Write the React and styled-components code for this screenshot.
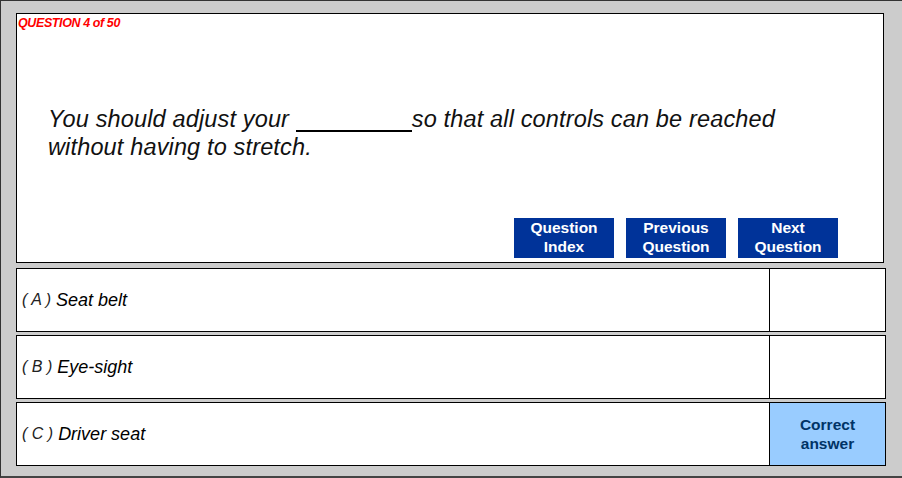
import styled, { createGlobalStyle } from 'styled-components';

const GlobalStyle = createGlobalStyle`
  html, body {
    margin: 0;
    padding: 0;
    background: #cccccc;
  }
`;

const answers = [
  { letter: 'A', text: 'Seat belt', correct: false },
  { letter: 'B', text: 'Eye-sight', correct: false },
  { letter: 'C', text: 'Driver seat', correct: true },
];

const App = () => {
  return (
    <>
      <GlobalStyle />
      <Frame>
        <QuestionPanel>
          <Counter>QUESTION 4 of 50</Counter>
          <QuestionText>
            You should adjust your <Blank />so that all controls can be reached
            without having to stretch.
          </QuestionText>
          <NavBar>
            <NavButton>Question<br />Index</NavButton>
            <NavButton>Previous<br />Question</NavButton>
            <NavButton>Next<br />Question</NavButton>
          </NavBar>
        </QuestionPanel>
        <AnswerList>
          {answers.map((a) => (
            <AnswerRow key={a.letter}>
              <AnswerText>
                <Letter>( {a.letter} )</Letter> {a.text}
              </AnswerText>
              <ResultCell correct={a.correct}>
                {a.correct && <>Correct<br />answer</>}
              </ResultCell>
            </AnswerRow>
          ))}
        </AnswerList>
      </Frame>
    </>
  );
};

const Frame = styled.div`
  box-sizing: border-box;
  width: 902px;
  height: 478px;
  background: #cccccc;
  border-top: 1px solid #333333;
  border-left: 1px solid #333333;
  border-bottom: 2px solid #444444;
  padding: 12px 0 0 15px;
  display: flex;
  flex-direction: column;
  font-family: 'Liberation Sans', Arial, sans-serif;
`;

const QuestionPanel = styled.div`
  box-sizing: border-box;
  width: 868px;
  height: 250px;
  background: #ffffff;
  border: 1px solid #000000;
  display: flex;
  flex-direction: column;
  padding: 2px 0 4px 1px;
`;

const Counter = styled.div`
  color: #ff0000;
  font-size: 12.5px;
  font-weight: bold;
  font-style: italic;
  letter-spacing: -0.4px;
  line-height: 14px;
`;

const QuestionText = styled.div`
  margin: 75px 0 0 30px;
  width: 770px;
  font-size: 23.5px;
  font-style: italic;
  letter-spacing: 0.15px;
  line-height: 28px;
  color: #111111;
`;

const Blank = styled.span`
  display: inline-block;
  width: 116px;
  height: 14px;
  vertical-align: -5px;
  border-bottom: 2px solid #000000;
`;

const NavBar = styled.div`
  margin-top: auto;
  align-self: flex-end;
  margin-right: 45px;
  display: flex;
  gap: 12px;
`;

const NavButton = styled.div`
  width: 100px;
  height: 40px;
  background: #003399;
  color: #ffffff;
  font-size: 15.5px;
  font-weight: bold;
  line-height: 19px;
  text-align: center;
  box-sizing: border-box;
`;

const AnswerList = styled.div`
  margin-top: 5px;
  display: flex;
  flex-direction: column;
  gap: 3px;
`;

const AnswerRow = styled.div`
  box-sizing: border-box;
  width: 870px;
  height: 64px;
  background: #ffffff;
  border: 1px solid #000000;
  display: flex;
`;

const AnswerText = styled.div`
  flex: 1;
  display: flex;
  align-items: center;
  gap: 5px;
  padding-left: 5px;
  font-size: 18px;
  font-style: italic;
  color: #000000;
`;

const Letter = styled.span`
  font-size: 16px;
  color: #222222;
`;

const ResultCell = styled.div`
  width: 115px;
  border-left: 1px solid #000000;
  background: ${({ correct }) => (correct ? '#99ccff' : '#ffffff')};
  color: #003366;
  font-size: 15.5px;
  font-weight: bold;
  line-height: 19px;
  text-align: center;
  display: flex;
  align-items: center;
  justify-content: center;
`;

export default App;
